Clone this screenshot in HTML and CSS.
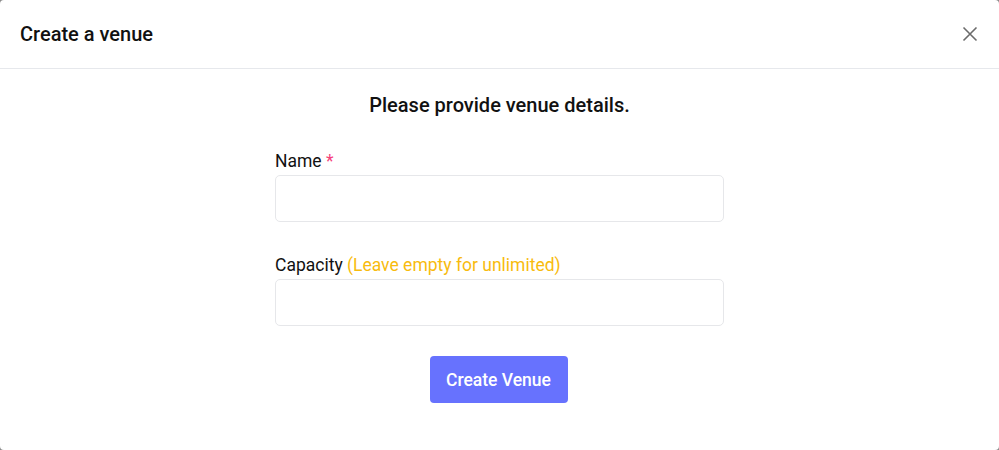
FILE: index.html
```html
<!DOCTYPE html>
<html lang="en">
<head>
<meta charset="utf-8">
<title>Create a venue</title>
<link rel="stylesheet" href="styles.css">
</head>
<body>
<div class="modal">
  <header class="modal-header">
    <h1 class="modal-title">Create a venue</h1>
    <button class="close" aria-label="Close">
      <svg width="16" height="16" viewBox="0 0 16 16"><path d="M1.5 1.5 L14.5 14.5 M14.5 1.5 L1.5 14.5" stroke="#6b6b6b" stroke-width="1.6" fill="none"/></svg>
    </button>
  </header>
  <main class="modal-body">
    <h2 class="subtitle">Please provide venue details.</h2>
    <form class="form">
      <div class="field">
        <label class="label">Name <span class="req">*</span></label>
        <input class="input" type="text">
      </div>
      <div class="field">
        <label class="label">Capacity <span class="hint">(Leave empty for unlimited)</span></label>
        <input class="input" type="text">
      </div>
      <div class="actions">
        <button type="button" class="btn">Create Venue</button>
      </div>
    </form>
  </main>
</div>
</body>
</html>
```
FILE: styles.css
```css
* { box-sizing: border-box; }
html, body { margin: 0; padding: 0; }
body {
  background: #8a8a8a;
  font-family: Roboto, "Liberation Sans", Arial, sans-serif;
  color: #111;
  width: 999px;
  height: 450px;
  overflow: hidden;
}
.modal {
  width: 999px;
  height: 450px;
  background: #fff;
  border-radius: 4px;
}
.modal-header {
  height: 69px;
  border-bottom: 1px solid #e6e8ec;
  display: flex;
  align-items: center;
  justify-content: space-between;
  padding: 0 20px 1px 20px;
}
.modal-title {
  margin: 0;
  font-size: 20px;
  line-height: 30px;
  font-weight: 500;
  color: #111;
}
.close {
  background: none;
  border: 0;
  padding: 0;
  margin-right: 1px;
  display: flex;
  cursor: pointer;
}
.modal-body {
  padding-top: 21px;
  display: flex;
  flex-direction: column;
  align-items: center;
}
.subtitle {
  margin: 0;
  font-size: 20px;
  font-weight: 500;
  line-height: 30px;
  color: #111;
}
.form {
  width: 449px;
  margin-top: 29px;
  display: flex;
  flex-direction: column;
}
.field {
  display: flex;
  flex-direction: column;
  gap: 2px;
}
.field + .field { margin-top: 31px; }
.label {
  font-size: 17.5px;
  line-height: 24px;
  color: #111;
}
.req { color: #f5417a; }
.hint { color: #f8bb0e; }
.input {
  height: 47px;
  border: 1px solid #e6e7ea;
  border-radius: 5px;
  background: #fff;
  font: inherit;
}
.actions {
  display: flex;
  justify-content: center;
  margin-top: 30px;
  padding-right: 2px;
}
.btn {
  width: 138px;
  height: 47px;
  border: 0;
  border-radius: 4px;
  background: #6772fe;
  color: #fff;
  font-family: inherit;
  font-size: 17.5px;
  font-weight: 500;
  cursor: pointer;
}
```
